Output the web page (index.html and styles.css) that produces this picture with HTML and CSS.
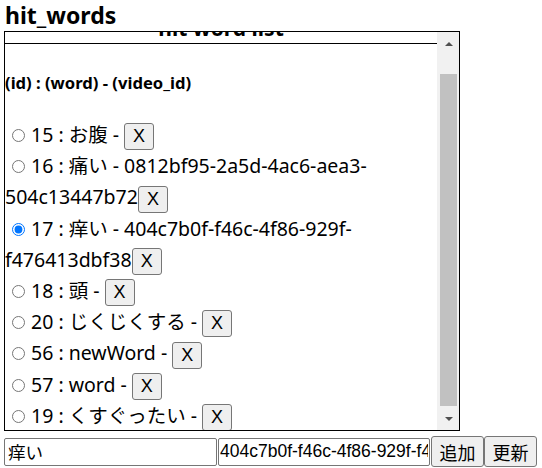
FILE: index.html
```html
<!DOCTYPE html>
<html lang="ja">
<head>
<meta charset="utf-8">
<title>hit_words</title>
<link rel="stylesheet" href="styles.css">
</head>
<body>
<h2 class="title">hit_words</h2>
<div class="panel">
  <div class="list" id="list">
    <h3 class="list-head">hit word list</h3>
    <p class="legend">(id) : (word) - (video_id)</p>
    <div class="items">
      <div class="item"><input type="radio" name="word" class="pick">15 : お腹 - <button class="del">X</button></div>
      <div class="item"><input type="radio" name="word" class="pick">16 : 痛い - 0812bf95-2a5d-4ac6-aea3-<wbr>504c13447b72<button class="del">X</button></div>
      <div class="item"><input type="radio" name="word" class="pick" checked>17 : 痒い - 404c7b0f-f46c-4f86-929f-<wbr>f476413dbf38<button class="del">X</button></div>
      <div class="item"><input type="radio" name="word" class="pick">18 : 頭 - <button class="del">X</button></div>
      <div class="item"><input type="radio" name="word" class="pick">20 : じくじくする - <button class="del">X</button></div>
      <div class="item"><input type="radio" name="word" class="pick">56 : newWord - <button class="del">X</button></div>
      <div class="item"><input type="radio" name="word" class="pick">57 : word - <button class="del">X</button></div>
      <div class="item"><input type="radio" name="word" class="pick">19 : くすぐったい - <button class="del">X</button></div>
    </div>
  </div>
  <div class="scrollbar" aria-hidden="true">
    <div class="sb-btn up"></div>
    <div class="sb-track"><div class="sb-thumb"></div></div>
    <div class="sb-btn down"></div>
  </div>
</div>
<div class="form"><input class="field word" type="text" value="痒い"><input class="field vid" type="text" value="404c7b0f-f46c-4f86-929f-f476413dbf38"><button class="act">追加</button><button class="act next">更新</button></div>
<script src="script.js"></script>
</body>
</html>
```

FILE: styles.css
```css
html, body {
  background: #fff;
}
body {
  margin: 0 4px;
  color: #000;
  font-family: "Noto Sans", "Noto Sans CJK JP", sans-serif;
}
.title {
  margin: 0;
  padding-left: 1px;
  font-size: 23px;
  line-height: 31px;
  font-weight: 700;
}
.panel {
  display: flex;
  width: 454px;
  height: 398px;
  border: 1px solid #000;
}
.list {
  flex: 1;
  min-width: 0;
  overflow: hidden;
}
.list-head {
  margin: 0;
  padding-top: 8px;
  font-size: 21px;
  line-height: 30px;
  font-weight: 700;
  text-align: center;
  border-bottom: 1px solid #000;
}
.legend {
  margin: 23px 0 0;
  font-size: 16.6px;
  font-weight: 700;
  line-height: 32px;
}
.items {
  margin-top: 20px;
  padding-bottom: 6px;
  font-size: 19.5px;
  line-height: 31px;
}
.pick {
  width: 13px;
  height: 13px;
  margin: 0 6px 0 7px;
}
.del {
  width: 30px;
  height: 27px;
  padding: 0;
  font: 18px/25px "Liberation Sans", sans-serif;
  color: #000;
  background: #efefef;
  border: 1px solid #767676;
  border-radius: 3px;
  vertical-align: middle;
}
.scrollbar {
  width: 22px;
  display: flex;
  flex-direction: column;
  background: #f1f1f1;
}
.sb-btn {
  height: 23px;
  display: flex;
  align-items: center;
  justify-content: center;
  padding-left: 1px;
}
.sb-btn::before {
  content: "";
  border-left: 4.5px solid transparent;
  border-right: 4.5px solid transparent;
}
.up::before {
  border-bottom: 4px solid #505050;
}
.down::before {
  border-top: 4px solid #505050;
}
.sb-track {
  flex: 1;
  padding: 19px 2px 0 3px;
}
.sb-thumb {
  height: 332px;
  background: #c1c1c1;
}
.form {
  display: flex;
  align-items: center;
  margin-top: 5px;
}
.field {
  box-sizing: border-box;
  height: 28px;
  padding: 1px 1px;
  font: 17.5px "Liberation Sans", "Noto Sans CJK JP", sans-serif;
  color: #000;
  background: #fff;
  border: 1px solid #767676;
  border-radius: 2px;
}
.word {
  width: 213px;
  padding-left: 3px;
}
.vid {
  width: 212px;
  margin-left: 1px;
}
.act {
  box-sizing: border-box;
  width: 53px;
  height: 31px;
  margin-left: 1px;
  padding: 0;
  font: 18px "Noto Sans CJK JP", sans-serif;
  color: #000;
  background: #efefef;
  border: 1px solid #767676;
  border-radius: 3px;
}
.act.next {
  margin-left: 0;
}
```

FILE: script.js
```js
document.getElementById('list').scrollTop = 27;
```
